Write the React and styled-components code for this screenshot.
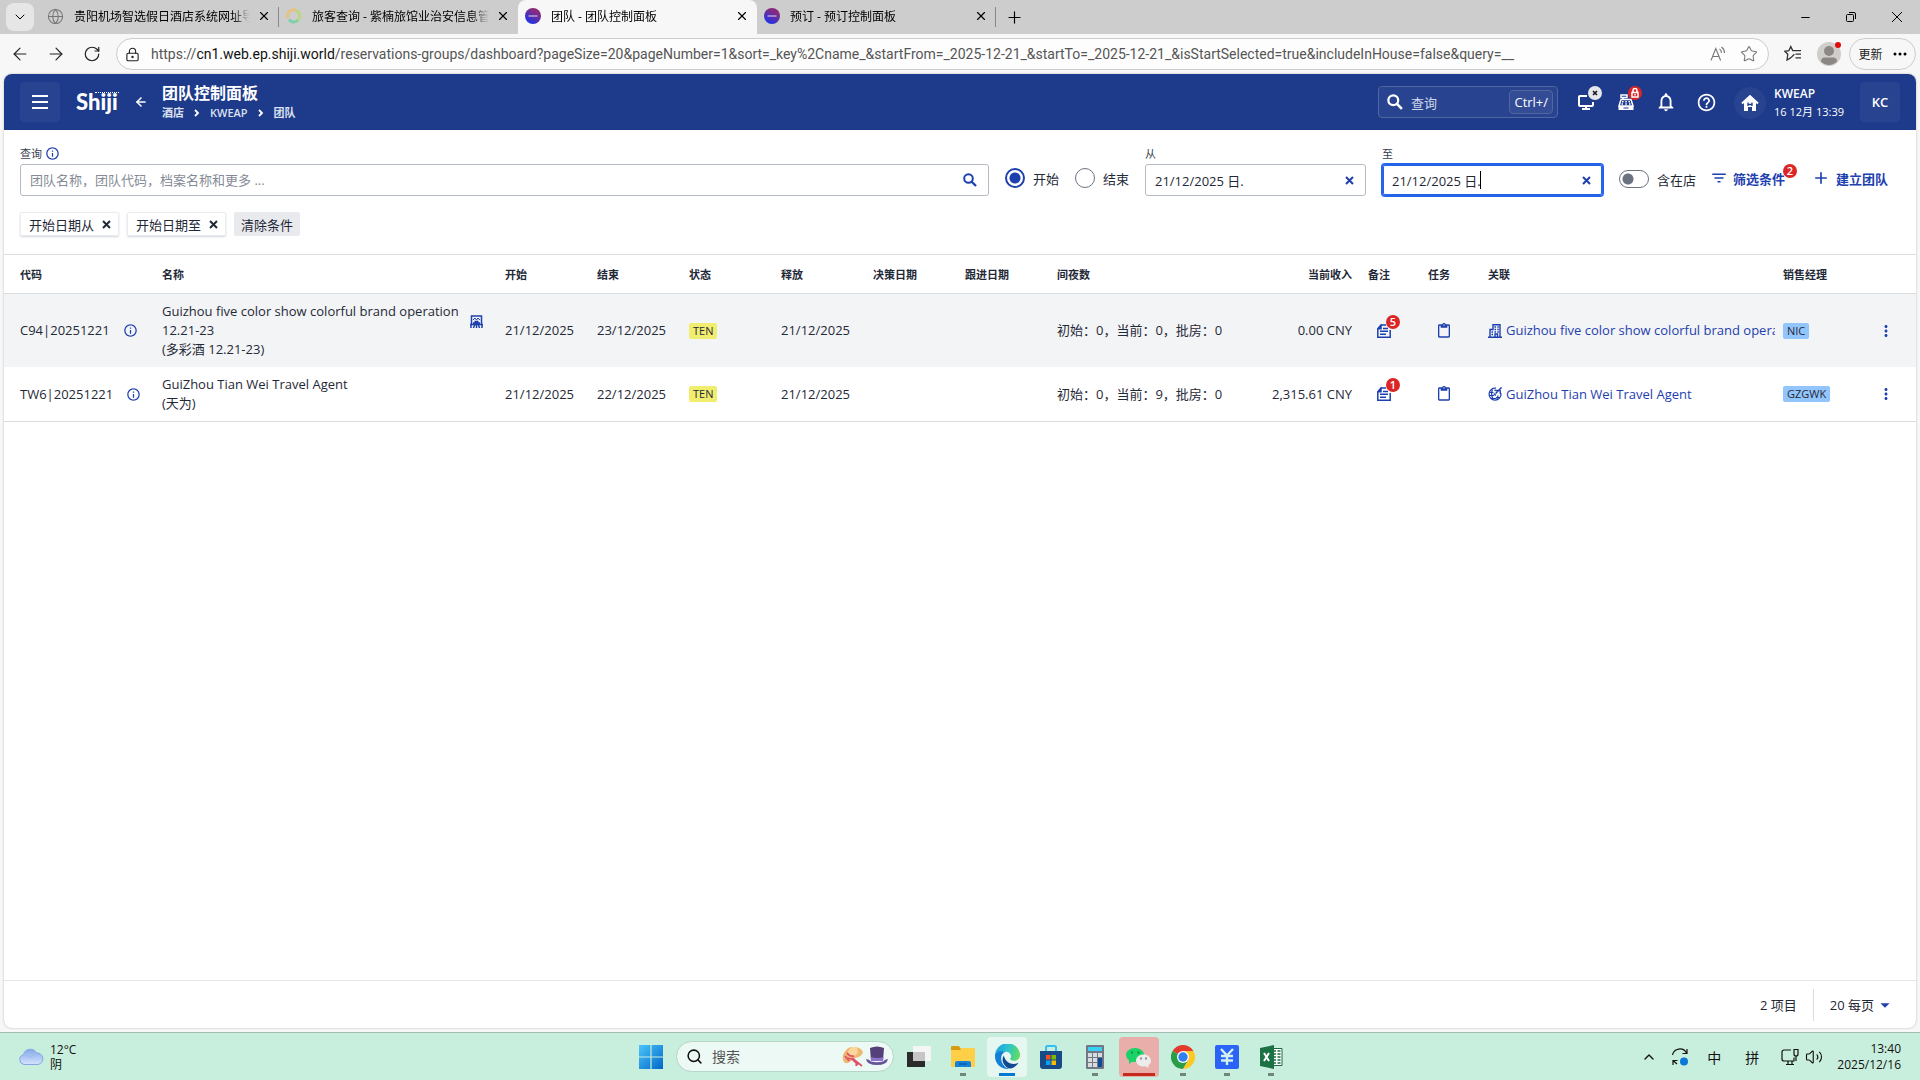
import styled, { createGlobalStyle, css } from "styled-components";
import {
  MdAdd,
  MdArrowDropDown,
  MdFilterList,
  MdHelpOutline,
  MdInfoOutline,
  MdMoreVert,
  MdNotificationsNone,
  MdOutlineContentPaste,
  MdSearch,
} from "react-icons/md";
import {
  ArrowLeft,
  ArrowRight,
  ChevronDown,
  ChevronUp,
  Globe,
  LockKeyhole,
  Minus,
  Plus,
  RotateCw,
  Search,
  Star,
  Volume2,
  X,
} from "lucide-react";

const tabs = [
  { title: "贵阳机场智选假日酒店系统网址导航", icon: "globe" },
  { title: "旅客查询 - 紫楠旅馆业治安信息管理系统", icon: "ring" },
  { title: "团队 - 团队控制面板", icon: "shiji", active: true },
  { title: "预订 - 预订控制面板", icon: "shiji" },
];

const groups = [
  {
    code: "C94|20251221",
    name: "Guizhou five color show colorful brand operation 12.21-23",
    localName: "(多彩酒 12.21-23)",
    event: true,
    start: "21/12/2025",
    end: "23/12/2025",
    release: "21/12/2025",
    nights: "初始：0，当前：0，批房：0",
    revenue: "0.00 CNY",
    notes: 5,
    link: "Guizhou five color show colorful brand operation 12.21-23",
    linkIcon: "company",
    manager: "NIC",
  },
  {
    code: "TW6|20251221",
    name: "GuiZhou Tian Wei Travel Agent",
    localName: "(天为)",
    start: "21/12/2025",
    end: "22/12/2025",
    release: "21/12/2025",
    nights: "初始：0，当前：9，批房：0",
    revenue: "2,315.61 CNY",
    notes: 1,
    link: "GuiZhou Tian Wei Travel Agent",
    linkIcon: "agent",
    manager: "GZGWK",
  },
];

function App() {
  return (
    <>
      <GlobalStyle />
      <Screen>
        <TabStrip />
        <AddressRow />
        <Page>
          <Header />
          <Filters />
          <GroupsTable />
          <Footer />
        </Page>
        <Taskbar />
      </Screen>
    </>
  );
}

export default App;

function TabStrip() {
  return (
    <TabBar>
      <TabMenu aria-label="标签页">
        <ChevronDown size={16} strokeWidth={1.5} />
      </TabMenu>
      {tabs.map((tab, i) => (
        <Tab key={tab.title} $active={tab.active} $line={i === 0 || i === 3}>
          <TabIcon name={tab.icon} />
          <TabTitle>{tab.title}</TabTitle>
          <TabClose aria-label="关闭">
            <X size={14} strokeWidth={2} />
          </TabClose>
        </Tab>
      ))}
      <NewTab aria-label="新标签页">
        <Plus size={19} strokeWidth={1.5} />
      </NewTab>
      <WindowButtons>
        <button aria-label="最小化">
          <Minus size={13} strokeWidth={2} />
        </button>
        <button aria-label="还原">
          <svg width="12" height="12" viewBox="0 0 12 12" fill="none" stroke="#000">
            <rect x="1.5" y="3.5" width="7" height="7" rx="1" />
            <path d="M4 1.5h5a1.5 1.5 0 0 1 1.500 1.500v5" />
          </svg>
        </button>
        <button aria-label="关闭窗口">
          <svg width="12" height="12" viewBox="0 0 12 12" fill="none" stroke="#000">
            <path d="M1 1l10 10M11 1L1 11" />
          </svg>
        </button>
      </WindowButtons>
    </TabBar>
  );
}

function TabIcon({ name }) {
  if (name === "globe") return <Globe size={17} strokeWidth={1.5} color="#777" />;
  if (name === "ring")
    return (
      <svg width="16" height="16" viewBox="0 0 16 16" fill="none" strokeWidth="3">
        <path d="M2 10a6 6 0 0 1 8-7.600" stroke="#e6c184" />
        <path d="M10 2.400a6 6 0 0 1 2 9.800" stroke="#bcd583" />
        <path d="M12 12.200A6 6 0 0 1 3 11.500" stroke="#7fd0a8" />
      </svg>
    );
  return (
    <svg width="16" height="16" viewBox="0 0 16 16">
      <defs>
        <linearGradient id="shijiDot" x1="0.8" y1="0" x2="0.2" y2="1">
          <stop offset="0.2" stopColor="#8a2a7c" />
          <stop offset="1" stopColor="#1434f0" />
        </linearGradient>
      </defs>
      <circle cx="8" cy="8" r="8" fill="url(#shijiDot)" />
      <path d="M3.500 8h9" stroke="#b59fdb" strokeWidth="1.500" />
    </svg>
  );
}

function AddressRow() {
  return (
    <Toolbar>
      <ToolButton aria-label="后退">
        <ArrowLeft size={20} strokeWidth={1.4} />
      </ToolButton>
      <ToolButton aria-label="前进">
        <ArrowRight size={20} strokeWidth={1.4} />
      </ToolButton>
      <ToolButton aria-label="刷新">
        <RotateCw size={18} strokeWidth={1.6} />
      </ToolButton>
      <AddressBox>
        <LockKeyhole size={15} strokeWidth={1.8} />
        <AddressText>
          https://<b>cn1.web.ep.shiji.world</b>
          /reservations-groups/dashboard?pageSize=20&amp;pageNumber=1&amp;sort=_key%2Cname_&amp;startFrom=_2025-12-21_&amp;startTo=_2025-12-21_&amp;isStartSelected=true&amp;includeInHouse=false&amp;query=__
        </AddressText>
        <svg width="16" height="16" viewBox="0 0 16 16" fill="none" stroke="#777" strokeWidth="1.100">
          <path d="M1 14.500L5.800 2.500l4.800 12M2.700 10.500h6.200M9.500 3a4.500 4.500 0 0 1 2 4M11.500 1a7.500 7.500 0 0 1 3 6" />
        </svg>
        <Star size={18} strokeWidth={1.4} color="#777" />
      </AddressBox>
      <ToolButton aria-label="收藏夹">
        <svg width="18" height="18" viewBox="0 0 18 18" fill="none" stroke="#333" strokeWidth="1.300">
          <path d="M10 5.600H17M11.500 9.200H17M11.500 12.800H17" />
          <path d="M10 5.600H8.700L6.800 1.600 4.900 5.600.8 6.300l3 3-.8 5.700 4-2.400M7 12.600l3.300-3.400" />
        </svg>
      </ToolButton>
      <Profile aria-label="个人资料">
        <svg width="24" height="24" viewBox="0 0 24 24">
          <circle cx="12" cy="12" r="12" fill="#d0cecb" />
          <circle cx="12" cy="9" r="5" fill="#8b8784" />
          <path d="M4 19.500q0-4 4-4h8q4 0 4 4a11 11 0 0 1-16 0z" fill="#8b8784" />
        </svg>
        <ProfileDot />
      </Profile>
      <UpdateButton>
        更新
        <svg width="14" height="4" viewBox="0 0 14 4">
          <circle cx="2" cy="2" r="1.500" />
          <circle cx="7" cy="2" r="1.500" />
          <circle cx="12" cy="2" r="1.500" />
        </svg>
      </UpdateButton>
    </Toolbar>
  );
}

function Header() {
  return (
    <HeaderBar>
      <SquareButton aria-label="菜单">
        <svg width="16" height="16" viewBox="0 0 16 16" stroke="#fff" strokeWidth="2">
          <path d="M0 2h16M0 8h16M0 14h16" />
        </svg>
      </SquareButton>
      <Logo>
        Shiji
        <LogoDots />
      </Logo>
      <BackLink href="#" aria-label="返回">
        <ArrowLeft size={14} strokeWidth={2.6} />
      </BackLink>
      <Titles>
        <h1>团队控制面板</h1>
        <Crumbs>
          <a href="#">酒店</a>
          <CrumbArrow />
          <a href="#">KWEAP</a>
          <CrumbArrow />
          <a href="#">团队</a>
        </Crumbs>
      </Titles>
      <HeaderSearch>
        <SearchIcon size={16} />
        <span>查询</span>
        <kbd>Ctrl+/</kbd>
      </HeaderSearch>
      <HeaderIcons>
        <HeaderButton aria-label="显示器">
          <svg width="18" height="18" viewBox="0 0 18 18" fill="none" stroke="#fff" strokeWidth="2">
            <path d="M10 3H3a1 1 0 0 0-1 1v8a1 1 0 0 0 1 1h12a1 1 0 0 0 1-1V9M9 13v3M5 16h8" />
          </svg>
          <HeaderBadge>
            <Cross size={6} width={1.6} />
          </HeaderBadge>
        </HeaderButton>
        <HeaderButton aria-label="收银">
          <svg width="18" height="18" viewBox="0 0 18 18" fill="none" stroke="#fff" strokeWidth="1.500">
            <path d="M4 2h6v2.500H4zM6 4.500v2" />
            <path d="M4 6.500h10l2 6.500H2z" />
            <path d="M1.500 13h15v4h-15z" fill="#fff" stroke="none" />
            <path d="M5 8.700h1.500M8.300 8.700h1.500M11.500 8.700H13M4.500 11H6M8.300 11h1.500M12 11h1.500" />
            <path d="M6.500 15h5" stroke="#1e3a8a" strokeWidth="1" />
          </svg>
          <HeaderBadge $red>
            <svg width="8" height="10" viewBox="0 0 8 10" fill="none" stroke="#fff" strokeWidth="1.500">
              <path d="M2 4V2.500a2 2 0 0 1 4 0V4M1 4.500h6V9H1zM4 6v1.500" />
            </svg>
          </HeaderBadge>
        </HeaderButton>
        <HeaderButton aria-label="通知">
          <MdNotificationsNone size={22} />
        </HeaderButton>
        <HeaderButton aria-label="帮助">
          <MdHelpOutline size={21} />
        </HeaderButton>
      </HeaderIcons>
      <Property>
        <PropertyIcon>
          <svg width="18" height="18" viewBox="0 0 18 18">
            <path d="M1 9.500L9 2l8 7.500" fill="none" stroke="#fff" strokeWidth="2" />
            <path d="M9 2.500l6 5.800V17h-4v-4H7v4H3V8.300z" fill="#fff" />
            <path d="M7 8.500V12M11 8.500V12M7 10.500h4" stroke="#1e3a8a" strokeWidth="1.300" fill="none" />
          </svg>
        </PropertyIcon>
        <div>
          <strong>KWEAP</strong>
          <time>16 12月 13:39</time>
        </div>
      </Property>
      <SquareButton>KC</SquareButton>
    </HeaderBar>
  );
}

function CrumbArrow() {
  return (
    <svg width="6" height="8" viewBox="0 0 6 8" fill="none" stroke="#fff" strokeWidth="1.800">
      <path d="M1 1l3 3-3 3" />
    </svg>
  );
}

function Cross({ size = 9, width = 2 }) {
  return (
    <svg width={size} height={size} viewBox={`0 0 ${size} ${size}`} stroke="currentColor" strokeWidth={width}>
      <path d={`M1 1L${size - 1} ${size - 1}M${size - 1} 1L1 ${size - 1}`} />
    </svg>
  );
}

function SearchIcon({ size = 14 }) {
  return (
    <svg width={size} height={size} viewBox="0 0 14 14" fill="none" stroke="currentColor" strokeWidth="2">
      <circle cx="5.500" cy="5.500" r="4.300" />
      <path d="M8.700 8.700l4.300 4.300" strokeWidth="2.300" />
    </svg>
  );
}

function Filters() {
  return (
    <FilterPanel>
      <FilterRow>
        <Field $grow>
          <FieldLabel htmlFor="query">
            查询 <MdInfoOutline size={15} color="#1e40af" />
          </FieldLabel>
          <FieldBox>
            <input id="query" placeholder="团队名称，团队代码，档案名称和更多 ..." />
            <IconButton aria-label="搜索">
              <SearchIcon />
            </IconButton>
          </FieldBox>
        </Field>
        <Radios>
          <label>
            <input type="radio" name="dateKind" defaultChecked />
            开始
          </label>
          <label>
            <input type="radio" name="dateKind" />
            结束
          </label>
        </Radios>
        <Field>
          <FieldLabel htmlFor="from">从</FieldLabel>
          <FieldBox>
            <input id="from" defaultValue="21/12/2025 日." />
            <IconButton aria-label="清除">
              <Cross />
            </IconButton>
          </FieldBox>
        </Field>
        <Field>
          <FieldLabel htmlFor="to">至</FieldLabel>
          <FieldBox $focused>
            <input id="to" defaultValue="21/12/2025 日." />
            <Caret />
            <IconButton aria-label="清除">
              <Cross />
            </IconButton>
          </FieldBox>
        </Field>
        <Switch>
          <input type="checkbox" role="switch" />
          含在店
        </Switch>
        <TextButton>
          <MdFilterList size={18} />
          <span>
            筛选条件
            <Badge>2</Badge>
          </span>
        </TextButton>
        <TextButton>
          <MdAdd size={20} />
          <span>建立团队</span>
        </TextButton>
      </FilterRow>
      <Chips>
        <Chip>
          开始日期从 <Cross />
        </Chip>
        <Chip>
          开始日期至 <Cross />
        </Chip>
        <ClearButton>清除条件</ClearButton>
      </Chips>
    </FilterPanel>
  );
}

function GroupsTable() {
  return (
    <TableArea>
      <Table>
        <colgroup>
          <Col $w={150} />
          <col />
          <Col $w={92} />
          <Col $w={92} />
          <Col $w={92} />
          <Col $w={92} />
          <Col $w={92} />
          <Col $w={92} />
          <Col $w={191} />
          <Col $w={120} />
          <Col $w={60} />
          <Col $w={60} />
          <Col $w={295} />
          <Col $w={93} />
          <Col $w={48} />
        </colgroup>
        <thead>
          <tr>
            <th>代码</th>
            <th>名称</th>
            <th>开始</th>
            <th>结束</th>
            <th>状态</th>
            <th>释放</th>
            <th>决策日期</th>
            <th>跟进日期</th>
            <th>间夜数</th>
            <RightTh>当前收入</RightTh>
            <th>备注</th>
            <th>任务</th>
            <th>关联</th>
            <th>销售经理</th>
            <th aria-label="操作" />
          </tr>
        </thead>
        <tbody>
          {groups.map((group) => (
            <tr key={group.code}>
              <td>
                <CodeCell>
                  {group.code}
                  <IconButton aria-label="详情">
                    <MdInfoOutline size={15} />
                  </IconButton>
                </CodeCell>
              </td>
              <td>
                <NameCell>
                  <div>
                    {group.name}
                    <br />
                    {group.localName}
                  </div>
                  {group.event && (
                    <EventMark>
                      <EventIcon />
                    </EventMark>
                  )}
                </NameCell>
              </td>
              <td>{group.start}</td>
              <td>{group.end}</td>
              <td>
                <Tag>TEN</Tag>
              </td>
              <td>{group.release}</td>
              <td />
              <td />
              <td>{group.nights}</td>
              <RightTd>{group.revenue}</RightTd>
              <IconTd>
                <IconButton aria-label="备注">
                  <NotesIcon />
                  <Badge>{group.notes}</Badge>
                </IconButton>
              </IconTd>
              <IconTd>
                <IconButton aria-label="任务">
                  <MdOutlineContentPaste size={16} />
                </IconButton>
              </IconTd>
              <td>
                <RelatedLink href="#">
                  {group.linkIcon === "company" ? <CompanyIcon /> : <AgentIcon />}
                  <span>{group.link}</span>
                </RelatedLink>
              </td>
              <td>
                <Tag $blue>{group.manager}</Tag>
              </td>
              <IconTd>
                <IconButton aria-label="更多">
                  <MdMoreVert size={18} />
                </IconButton>
              </IconTd>
            </tr>
          ))}
        </tbody>
      </Table>
    </TableArea>
  );
}

function EventIcon() {
  return (
    <svg width="13" height="13" viewBox="0 0 13 13" fill="none" stroke="#1e40af">
      <path d="M1.500 9.500V1h10v8.500" strokeWidth="1.500" />
      <path d="M3 5l2-2 1.500 2L8 3l2 2" />
      <path d="M0 9.500h13M4.500 6.500h4M3 8h7" strokeWidth="1.500" />
      <path d="M1 13v-3M3.500 13l1-3M6.500 13V6M9.500 13l-1-3M12 13v-3" strokeWidth="1.500" />
    </svg>
  );
}

function NotesIcon() {
  return (
    <svg width="14" height="14" viewBox="0 0 14 14" fill="none" stroke="#1e40af" strokeWidth="1.500">
      <path d="M.8 5v8.200h12.400V6M4 1L.8 4.800H4zM4 1h5" />
      <path d="M3 7.200h8M3 10.200h6M6 4.500h5" />
    </svg>
  );
}

function CompanyIcon() {
  return (
    <svg width="14" height="14" viewBox="0 0 14 14" fill="none" stroke="#1e40af" strokeWidth="1.400">
      <path d="M0 13.300h14M2 13V5.500h3V.8h7V13M7 13v-3h2.500v3" />
      <path d="M6.500 3h1.500M9.300 3h1.500M6.500 5.500h1.500M9.300 5.500h1.500M6.500 8h1.500M9.300 8h1.500M3.500 8h1.500M3.500 10.500h1.500" />
    </svg>
  );
}

function AgentIcon() {
  return (
    <svg width="14" height="14" viewBox="0 0 14 14" fill="none" stroke="#1e40af" strokeWidth="1.200">
      <path d="M8 1.200a6 6 0 1 0 5 5.300" />
      <path d="M1.500 5.500h4M1 8.500h5M8 10.500h4M3 11.500h5M4.500 2.500Q2.500 7 5 12M8.500 12.500q1.500-1.500 1.500-4" />
      <path d="M13.600.4l-6 6.200M6.500 3.200l4.500.6M12 3l.5 4.200M5.800 6.500l2 2" strokeWidth="1.500" />
    </svg>
  );
}

function Footer() {
  return (
    <FooterBar>
      <span>2 项目</span>
      <PageSize>
        20 每页 <MdArrowDropDown size={22} color="#1e40af" />
      </PageSize>
    </FooterBar>
  );
}

function Taskbar() {
  return (
    <TaskbarRow>
      <Weather>
        <svg width="26" height="18" viewBox="0 0 26 18">
          <defs>
            <linearGradient id="cloud" x1="0" y1="0" x2="0" y2="1">
              <stop offset="0" stopColor="#86a9ea" />
              <stop offset="1" stopColor="#d3e3fc" />
            </linearGradient>
          </defs>
          <path d="M6 16.500a5 5 0 0 1-.5-9.800A7 7 0 0 1 18.500 5a5.800 5.800 0 0 1 1.500 11.500z" fill="url(#cloud)" stroke="#86a7e6" />
          <path d="M4 8q5-2 8 2 3-5 9-3" fill="none" stroke="#9db9f0" />
        </svg>
        <div>
          <p>12°C</p>
          <p>阴</p>
        </div>
      </Weather>
      <Apps>
        <AppButton aria-label="开始">
          <svg width="24" height="24" viewBox="0 0 24 24">
            <defs>
              <linearGradient id="win" x1="0" y1="0" x2="1" y2="1">
                <stop offset="0" stopColor="#4cc5fb" />
                <stop offset="1" stopColor="#0067c8" />
              </linearGradient>
            </defs>
            <path d="M0 0h11.400v11.400H0zM12.600 0H24v11.400H12.600zM0 12.600h11.400V24H0zM12.600 12.600H24V24H12.600z" fill="url(#win)" />
          </svg>
        </AppButton>
        <TaskSearch>
          <Search size={17} strokeWidth={2.2} />
          <input aria-label="搜索" placeholder="搜索" />
          <Hats />
        </TaskSearch>
        <AppButton aria-label="任务视图">
          <svg width="24" height="24" viewBox="0 0 24 24">
            <rect y="7" width="18" height="15" fill="#2b2b2b" />
            <rect x="6" y="1" width="18" height="15" fill="#f5f5f5" />
            <path d="M6 7h12v9H6z" fill="#c6c6c6" />
          </svg>
        </AppButton>
        <AppButton aria-label="文件资源管理器" $open>
          <svg width="24" height="24" viewBox="0 0 24 24">
            <path d="M0 2q0-1 1-1h7l2 3v4H0z" fill="#d99b10" />
            <path d="M0 5h9l2-2h12q1 0 1 1v18H0z" fill="#ffcf48" />
            <path d="M4 22v-4q0-2 2-2h12q2 0 2 2v4z" fill="#1683d8" />
            <path d="M8 19h8" stroke="#0c5aa8" strokeWidth="1.500" />
          </svg>
        </AppButton>
        <AppButton aria-label="Edge" $tile="light">
          <EdgeIcon />
        </AppButton>
        <AppButton aria-label="应用商店">
          <svg width="24" height="24" viewBox="0 0 24 24">
            <path d="M7 7V2.500Q7 1 8.500 1h7Q17 1 17 2.500V7" fill="none" stroke="#32c0f4" strokeWidth="2" />
            <path d="M1 6h22v15q0 3-3 3H4q-3 0-3-3z" fill="#164b87" />
            <path d="M7 10h4.500v4.500H7z" fill="#f25022" />
            <path d="M12.500 10H17v4.500h-4.500z" fill="#7fba00" />
            <path d="M7 15.500h4.500V20H7z" fill="#00a4ef" />
            <path d="M12.500 15.500H17V20h-4.500z" fill="#ffb900" />
          </svg>
        </AppButton>
        <AppButton aria-label="计算器" $open>
          <svg width="18" height="24" viewBox="0 0 18 24">
            <rect width="18" height="24" rx="1" fill="#6f7884" />
            <path d="M2 2h14v4H2z" fill="#38d0f4" />
            <path d="M2 8h4v4H2zM7 8h4v4H7zM12 8h4v4h-4zM2 13h4v4H2zM7 13h4v4H7zM2 18h4v4H2zM7 18h4v4H7z" fill="#d7dce1" />
            <path d="M12 13h4v9h-4z" fill="#104a94" />
          </svg>
        </AppButton>
        <AppButton aria-label="微信" $tile="red">
          <svg width="26" height="24" viewBox="0 0 26 24">
            <path d="M9 3c5 0 9 3 9 7s-4 7-9 7l-3-.3L3 19v-3.500Q0 13 0 10c0-4 4-7 9-7z" fill="#1bd266" />
            <path d="M17.500 9.500c4.200 0 7.500 2.700 7.500 6 0 2-1 3.500-2.500 4.700V23l-3-1.700-2 .2c-4.200 0-7.500-2.700-7.500-6s3.300-6 7.500-6z" fill="#ececec" />
            <path d="M5 7.500h2M11.500 7.500h2" stroke="#0a8f42" strokeWidth="2" />
            <path d="M14 13.500h2M19 13.500h2" stroke="#8e8e8e" strokeWidth="2" />
          </svg>
        </AppButton>
        <AppButton aria-label="Chrome" $open>
          <svg width="24" height="24" viewBox="0 0 24 24">
            <path d="M12 12L1.600 6A12 12 0 0 1 22.400 6z" fill="#e33b2e" />
            <path d="M12 12L1.600 6A12 12 0 0 0 12 24l5.500-9z" fill="#2a9d48" />
            <path d="M12 6h10.400A12 12 0 0 1 12 24l5.200-9z" fill="#fcc822" />
            <circle cx="12" cy="12" r="6" fill="#fff" />
            <circle cx="12" cy="12" r="4.700" fill="#3180ee" />
          </svg>
        </AppButton>
        <AppButton aria-label="财务" $open>
          <svg width="24" height="24" viewBox="0 0 24 24" fill="none">
            <rect width="24" height="24" rx="2" fill="#2b63f7" />
            <path d="M6 4l6 6.500L18 4M6 11h12M6 15.500h12M12 10.500V20" stroke="#d2f0ed" strokeWidth="2.400" />
          </svg>
        </AppButton>
        <AppButton aria-label="Excel" $open>
          <svg width="23" height="24" viewBox="0 0 23 24" fill="none">
            <path d="M11 3.500h11v17H11" fill="#fff" stroke="#1c6c41" />
            <path d="M13 6h3M13 9h3M13 12h3M13 15h3M13 18h3M17.500 6h3M17.500 9h3M17.500 12h3M17.500 15h3M17.500 18h3" stroke="#1c6c41" strokeWidth="1.500" />
            <path d="M0 3l14-3v24L0 21z" fill="#1c7244" />
            <path d="M4 8l5 8M9 8l-5 8" stroke="#fff" strokeWidth="2" />
          </svg>
        </AppButton>
      </Apps>
      <Tray>
        <ChevronUp size={16} strokeWidth={2} />
        <svg width="18" height="18" viewBox="0 0 18 18" fill="none" stroke="#111" strokeWidth="1.200">
          <path d="M1.500 7A7.500 7.500 0 0 1 15.500 5M16 1v4.500h-4.500M2 17v-4.500h4.500M2 12.500l4 3.500" />
          <circle cx="13" cy="13.500" r="4" fill="#0a78d6" stroke="none" />
        </svg>
        <InputMode>
          <span>中</span>
          <span>拼</span>
        </InputMode>
        <TraySystem>
          <svg width="18" height="18" viewBox="0 0 18 18" fill="none" stroke="#111" strokeWidth="1.200">
            <path d="M10 2H3a2 2 0 0 0-2 2v7a2 2 0 0 0 2 2h10V9.500M5 16.500h8M7 13v3M11 13v3M13 1.500h4V6a2 2 0 0 1-4 0zM15 8v5" />
          </svg>
          <Volume2 size={18} strokeWidth={1.5} />
        </TraySystem>
        <Clock>
          13:40
          <br />
          2025/12/16
        </Clock>
      </Tray>
    </TaskbarRow>
  );
}

function EdgeIcon() {
  return (
    <svg width="25" height="25" viewBox="0 0 24 24">
      <defs>
        <linearGradient id="edgeTop" x1="0" y1="0.300" x2="1" y2="0.500">
          <stop offset="0" stopColor="#1b9fe0" />
          <stop offset="0.500" stopColor="#2cc4cf" />
          <stop offset="1" stopColor="#62dc5c" />
        </linearGradient>
      </defs>
      <path d="M0 12A12 12 0 0 1 24 10.500c0 3.500-2.500 5.500-5.500 5.500-3 0-4.500-1-3.500-2.500 1.500-3-1-6-5-6C5 7.500 1 9 0 12z" fill="url(#edgeTop)" />
      <path d="M0 12c0-4 5-6 10-4.500-3 1-4.500 4-4 7.500.6 4.500 4 8 8 8.800A12 12 0 0 1 0 12z" fill="#1180d6" />
      <path d="M8.500 11c-3.500 5 1 12.500 6.500 12.600 3-.6 5.800-2.600 7.500-5.600-3 1.500-7 1.600-10-.5-2.500-1.700-3.500-4.500-4-6.500z" fill="#114a93" />
    </svg>
  );
}

function Hats() {
  return (
    <svg width="46" height="24" viewBox="0 0 46 24">
      <path d="M1 10Q5 1 11 2q8 0 10 5-1 5-8 6-6 6-10 5-3-3-2-8z" fill="#efb871" />
      <path d="M6 7q2-6 8-5 3 3 1 7l-6 4z" fill="#fbd79b" />
      <path d="M5 8q3 4 7 3M4 13l6 1 6 6M10 13l10 8M15 17l-1 4M3 11l4 5" fill="none" stroke="#e0506c" strokeWidth="1.700" />
      <path d="M28 3q7-3 14 0l-1 13H29z" fill="#554179" />
      <path d="M29 12q6 2 12.500 0l-.5 4H29z" fill="#8c72cd" />
      <path d="M24 14q3 0 5 2.500 6 1.500 12 0 2-2.500 5-2.500-1 6-11 6t-11-6z" fill="#67549a" />
    </svg>
  );
}

const GlobalStyle = createGlobalStyle`
  * {
    box-sizing: border-box;
  }
  body {
    margin: 0;
    background: #f7f7f7;
    color: #1f2937;
    font-family: "Open Sans", "Noto Sans CJK SC", sans-serif;
    font-size: 13px;
  }
  button, input {
    font: inherit;
    color: inherit;
  }
  button {
    border: none;
    padding: 0;
    background: none;
  }
  svg {
    flex-shrink: 0;
  }
  a {
    color: inherit;
    text-decoration: none;
  }
  h1, p {
    margin: 0;
  }
`;

const Screen = styled.div`
  display: flex;
  flex-direction: column;
  min-height: 100vh;
`;

const center = css`
  display: flex;
  align-items: center;
  justify-content: center;
`;

const TabBar = styled.nav`
  display: flex;
  align-items: center;
  height: 34px;
  padding-left: 6px;
  background: #cdcdcd;
  color: #000;
  font-size: 12px;
`;

const TabMenu = styled.button`
  ${center}
  width: 28px;
  height: 28px;
  margin-right: 6px;
  border-radius: 8px;
  background: #e6e6e6;
`;

const Tab = styled.div`
  display: flex;
  align-items: center;
  width: 239px;
  height: 34px;
  padding: 0 7px 2px;
  background: ${({ $active }) => ($active ? "#f7f7f7" : "transparent")};
  border-radius: 8px 8px 0 0;
  ${({ $line }) =>
    $line &&
    css`
      background: linear-gradient(#888, #888) right 7px / 1px 20px no-repeat;
    `}
`;

const TabTitle = styled.span`
  flex: 1;
  margin: 0 6px 0 10px;
  overflow: hidden;
  white-space: nowrap;
  mask-image: linear-gradient(to right, #000 90%, transparent);
`;

const TabClose = styled.button`
  ${center}
  width: 16px;
  height: 16px;
`;

const NewTab = styled.button`
  ${center}
  width: 36px;
  height: 30px;
`;

const WindowButtons = styled.div`
  display: flex;
  margin-left: auto;
  button {
    ${center}
    width: 46px;
    height: 34px;
  }
`;

const Toolbar = styled.div`
  display: flex;
  align-items: center;
  height: 40px;
  padding: 0 4px 0 2px;
  color: #222;
`;

const ToolButton = styled.button`
  ${center}
  width: 36px;
  height: 32px;
`;

const AddressBox = styled.div`
  display: flex;
  align-items: center;
  flex: 1;
  gap: 14px;
  min-width: 0;
  height: 32px;
  margin: 0 6px;
  padding: 0 10px 0 8px;
  border: 1px solid #ccc;
  border-radius: 16px;
  background: #fdfdfd;
`;

const AddressText = styled.span`
  flex: 1;
  margin-left: -3px;
  overflow: hidden;
  white-space: nowrap;
  color: #555;
  font-family: Roboto, sans-serif;
  font-size: 14px;
  b {
    color: #111;
    font-weight: 400;
  }
`;

const Profile = styled.button`
  ${center}
  position: relative;
  width: 36px;
  height: 32px;
`;

const ProfileDot = styled.span`
  position: absolute;
  top: 4px;
  right: 6px;
  width: 6px;
  height: 6px;
  border-radius: 50%;
  background: #e00b0b;
`;

const UpdateButton = styled.button`
  ${center}
  gap: 10px;
  width: 67px;
  height: 32px;
  margin-left: 2px;
  border: 1px solid #ccc;
  border-radius: 16px;
  font-size: 12px;
`;

const Page = styled.main`
  display: flex;
  flex: 1;
  flex-direction: column;
  margin: 0 4px 4px;
  overflow: hidden;
  border-radius: 8px;
  background: #fff;
  box-shadow: 0 0 2px #aaa;
`;

const HeaderBar = styled.header`
  display: flex;
  align-items: center;
  height: 56px;
  padding: 0 16px;
  background: #1e3a8a;
  color: #fff;
`;

const SquareButton = styled.button`
  ${center}
  width: 40px;
  height: 40px;
  border-radius: 4px;
  background: #28438f;
  font-weight: 600;
`;

const Logo = styled.span`
  position: relative;
  width: 43px;
  margin-left: 16px;
  font-family: Lato, sans-serif;
  font-size: 22px;
  font-weight: 900;
  line-height: 28px;
`;

const LogoDots = styled.i`
  position: absolute;
  top: 4px;
  right: 0;
  width: 24px;
  border-top: 1px dotted #fff;
`;

const BackLink = styled.a`
  ${center}
  width: 43px;
  height: 32px;
`;

const Titles = styled.div`
  h1 {
    font-size: 16px;
    font-weight: 700;
    line-height: 22px;
  }
`;

const Crumbs = styled.nav`
  display: flex;
  align-items: center;
  gap: 10px;
  color: #dbe1f1;
  font-size: 11px;
  font-weight: 600;
  line-height: 18px;
`;

const HeaderSearch = styled.button`
  display: flex;
  align-items: center;
  width: 180px;
  height: 32px;
  margin-left: auto;
  padding: 0 4px 0 8px;
  border: 1px solid #51679f;
  border-radius: 4px;
  background: #28438f;
  span {
    flex: 1;
    margin-left: 8px;
    text-align: left;
    color: #cfd6ea;
  }
  kbd {
    padding: 0 4px;
    border: 1px solid #51679f;
    border-radius: 4px;
    background: #334c95;
    font-family: inherit;
    line-height: 22px;
  }
`;

const HeaderIcons = styled.div`
  display: flex;
  margin: 0 8px;
`;

const HeaderButton = styled.button`
  ${center}
  position: relative;
  width: 40px;
  height: 40px;
`;

const HeaderBadge = styled.span`
  ${center}
  position: absolute;
  top: 4px;
  right: 4px;
  width: 14px;
  height: 14px;
  border-radius: 50%;
  background: ${({ $red }) => ($red ? "#dc2626" : "#e5e7eb")};
  color: #111827;
`;

const Property = styled.div`
  display: flex;
  align-items: center;
  gap: 8px;
  margin-right: 16px;
  padding-top: 1px;
  strong,
  time {
    display: block;
    font-size: 12px;
    line-height: 18px;
  }
  strong {
    font-weight: 600;
  }
  time {
    font-size: 11px;
  }
`;

const PropertyIcon = styled.span`
  ${center}
  width: 32px;
  height: 32px;
  border-radius: 50%;
  background: #28438f;
`;

const FilterPanel = styled.form`
  padding: 16px 16px 18px;
`;

const FilterRow = styled.div`
  display: flex;
  align-items: flex-end;
  gap: 16px;
`;

const Field = styled.div`
  flex: ${({ $grow }) => ($grow ? "1" : "0 0 221px")};
`;

const FieldLabel = styled.label`
  display: flex;
  align-items: center;
  gap: 3px;
  height: 14px;
  margin-bottom: 4px;
  color: #374151;
  font-size: 11px;
`;

const FieldBox = styled.div`
  display: flex;
  align-items: center;
  position: relative;
  height: 32px;
  padding: 0 11px 0 9px;
  border: 1px solid #b4bac4;
  border-radius: 3px;
  background: #fff;
  ${({ $focused }) =>
    $focused &&
    css`
      border-color: #2563eb;
      box-shadow: 0 0 0 1px #2563eb, inset 0 0 0 1px #2563eb;
    `}
  input {
    flex: 1;
    min-width: 0;
    padding: 0;
    border: none;
    outline: none;
    background: none;
  }
  input::placeholder {
    color: #858b96;
  }
`;

const Caret = styled.i`
  position: absolute;
  top: 6px;
  left: 97px;
  width: 1px;
  height: 18px;
  background: #000;
`;

const IconButton = styled.button.attrs({ type: "button" })`
  ${center}
  position: relative;
  color: #1e40af;
`;

const Radios = styled.div`
  display: flex;
  gap: 16px;
  height: 36px;
  label {
    display: flex;
    align-items: center;
    gap: 8px;
  }
  input {
    appearance: none;
    width: 20px;
    height: 20px;
    margin: 0;
    border: 1px solid #6b7280;
    border-radius: 50%;
  }
  input:checked {
    border: 2px solid #1e40af;
    background: radial-gradient(#1e40af 5px, #fff 6px);
  }
`;

const Switch = styled.label`
  display: flex;
  align-items: center;
  gap: 8px;
  height: 34px;
  input {
    appearance: none;
    width: 30px;
    height: 18px;
    margin: 0;
    border: 1px solid #6b7280;
    border-radius: 9px;
    background: radial-gradient(circle at 8px 8px, #6b7280 5px, #fff 6px);
  }
`;

const TextButton = styled.button.attrs({ type: "button" })`
  display: flex;
  align-items: center;
  gap: 5px;
  height: 36px;
  padding-right: 12px;
  color: #1e40af;
  font-weight: 600;
  svg {
    margin-left: -2px;
  }
  span {
    position: relative;
  }
`;

const Badge = styled.b`
  ${center}
  position: absolute;
  top: -5px;
  right: -12px;
  width: 14px;
  height: 14px;
  border-radius: 50%;
  background: #dc2626;
  color: #fff;
  font-size: 11px;
  font-weight: 600;
  line-height: 14px;
`;

const Chips = styled.div`
  display: flex;
  gap: 8px;
  margin-top: 16px;
`;

const Chip = styled.button.attrs({ type: "button" })`
  ${center}
  gap: 8px;
  height: 24px;
  padding: 0 7px 0 8px;
  border: 1px solid #ebecef;
  border-radius: 2px;
  box-shadow: 0 1px 2px #d1d5db;
`;

const ClearButton = styled.button.attrs({ type: "button" })`
  height: 24px;
  padding: 0 7px;
  border-radius: 2px;
  background: #e9eaee;
`;

const TableArea = styled.section`
  flex: 1;
`;

const Table = styled.table`
  width: 100%;
  table-layout: fixed;
  border-collapse: collapse;
  line-height: 19px;
  th,
  td {
    padding: 8px;
    text-align: left;
    white-space: nowrap;
  }
  th {
    height: 39px;
    padding: 0 8px;
    border: solid #d9dce1;
    border-width: 1px 0;
    font-size: 11px;
    font-weight: 700;
  }
  th:first-child,
  td:first-child {
    padding-left: 16px;
  }
  tbody tr:first-child {
    background: #f3f4f6;
  }
  tbody tr:last-child {
    border-bottom: 1px solid #d9dce1;
  }
`;

const Col = styled.col`
  width: ${({ $w }) => $w}px;
`;

const RightTh = styled.th`
  && {
    text-align: right;
  }
`;

const RightTd = styled.td`
  && {
    text-align: right;
  }
`;

const IconTd = styled.td`
  table && {
    padding-right: 20px;
  }
  && > button {
    margin: 0 auto;
  }
  && b {
    top: -9px;
    right: -9px;
  }
`;

const CodeCell = styled.div`
  display: flex;
  align-items: center;
  gap: 13px;
`;

const NameCell = styled.div`
  display: flex;
  justify-content: space-between;
  gap: 8px;
  padding-right: 6px;
  white-space: normal;
`;

const EventMark = styled.span`
  ${center}
  height: 38px;
`;

const Tag = styled.span`
  display: block;
  width: fit-content;
  padding: 0 4px;
  border-radius: 2px;
  background: ${({ $blue }) => ($blue ? "#93c5fd" : "#f1ed6f")};
  font-size: 11px;
  line-height: 16px;
`;

const RelatedLink = styled.a`
  display: flex;
  align-items: center;
  gap: 4px;
  margin-right: -8px;
  color: #1e40af;
  span {
    overflow: hidden;
  }
`;

const FooterBar = styled.footer`
  display: flex;
  align-items: center;
  justify-content: flex-end;
  gap: 16px;
  height: 48px;
  border-top: 1px solid #e5e7eb;
  padding-right: 20px;
`;

const PageSize = styled.button`
  display: flex;
  align-items: center;
  height: 32px;
  padding-left: 16px;
  border-left: 1px solid #d9dce1;
`;

const TaskbarRow = styled.footer`
  display: grid;
  grid-template-columns: 1fr auto 1fr;
  align-items: center;
  height: 48px;
  border-top: 1px solid #a3bdb1;
  background: #c8eedd;
  color: #111;
  font-size: 12px;
`;

const Weather = styled.div`
  display: flex;
  align-items: center;
  gap: 6px;
  padding-left: 18px;
  line-height: 15px;
`;

const Apps = styled.div`
  display: flex;
  align-items: center;
  padding-left: 2px;
`;

const AppButton = styled.button`
  ${center}
  width: 40px;
  height: 40px;
  margin: 0 2px;
  border-radius: 4px;
  background-color: ${({ $tile }) =>
    $tile === "red" ? "#e9adaa" : $tile === "light" ? "#e6f6f0" : "transparent"};
  background-repeat: no-repeat;
  background-position: center bottom 1px;
  ${({ $open }) =>
    $open &&
    css`
      background-image: linear-gradient(#71877d, #71877d);
      background-size: 6px 3px;
    `}
  ${({ $tile }) =>
    $tile &&
    css`
      background-image: ${$tile === "red"
        ? "linear-gradient(#c42b1c, #c42b1c)"
        : "linear-gradient(#0078d4, #0078d4)"};
      background-size: ${$tile === "red" ? "32px 3px" : "16px 3px"};
    `}
`;

const TaskSearch = styled.label`
  display: flex;
  align-items: center;
  gap: 9px;
  width: 218px;
  height: 31px;
  margin: 0 3px;
  padding: 0 5px 0 9px;
  border: 1px solid #b5d5c7;
  border-radius: 16px;
  background: #edf9f4;
  input {
    flex: 1;
    min-width: 0;
    padding: 0;
    border: none;
    background: none;
    font-size: 14px;
  }
  input::placeholder {
    color: #555;
  }
`;

const Tray = styled.div`
  display: flex;
  align-items: center;
  justify-content: flex-end;
  padding-right: 19px;
  gap: 14px;
`;

const InputMode = styled.div`
  display: flex;
  gap: 16px;
  margin-right: 4px;
  font-size: 14px;
  text-align: center;
  span {
    width: 22px;
  }
`;

const TraySystem = styled.div`
  display: flex;
  gap: 6px;
`;

const Clock = styled.time`
  text-align: right;
  line-height: 16px;
`;
